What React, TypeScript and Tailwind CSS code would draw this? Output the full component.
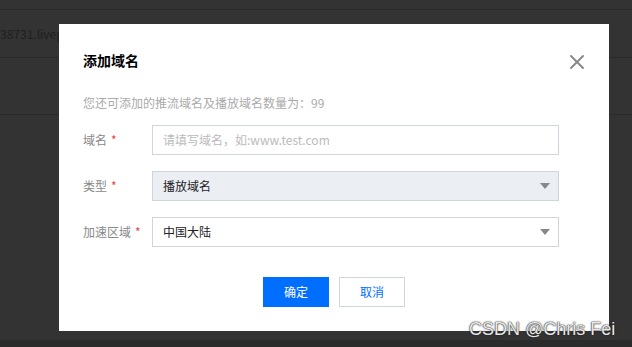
import { X } from "lucide-react";

const font = { fontFamily: '"Noto Sans CJK SC", "Noto Sans", sans-serif' };

const Caret = () => (
  <svg width="10" height="6" viewBox="0 0 10 6" className="text-[#888]">
    <path d="M0 0 H10 L5 6 Z" fill="currentColor" />
  </svg>
);

const Label = ({ text }: { text: string }) => (
  <div className="w-[69px] shrink-0 text-[12px] text-[#888]">
    {text}
    <span className="ml-1 text-[#e54545]">*</span>
  </div>
);

export default function App() {
  return (
    <div
      className="relative w-[632px] h-[347px] overflow-hidden bg-[#333333]"
      style={font}
    >
      {/* page behind the mask */}
      <div className="h-[10px] border-b border-[#2a2a2a]" />
      <div className="h-[48px] border-b border-[#2a2a2a] flex items-center">
        <span className="text-[12px] text-[#1f1f1f]">38731.livepush.myqcloud.com</span>
      </div>
      <div className="h-[57px] border-b border-[#2a2a2a]" />
      <div className="h-[225px]" />
      <div className="h-[7px] bg-[#2b2b2b]" />

      {/* dialog */}
      <div className="absolute left-[59px] top-[24px] w-[550px] h-[307px] bg-white">
        <div className="mt-[24px] h-[24px] flex items-center justify-between pl-[24px] pr-[20px]">
          <h2 className="text-[14px] leading-[20px] font-bold text-black">添加域名</h2>
          <X className="size-[24px] text-[#888] mt-[4px]" strokeWidth={1.9} />
        </div>
        <p className="pl-[24px] mt-[23px] text-[12px] leading-[16px] text-[#aaa]">
          您还可添加的推流域名及播放域名数量为：99
        </p>
        <div className="pl-[24px] pr-[50px] mt-[14px] flex flex-col gap-[16px]">
          <div className="flex items-center">
            <Label text="域名" />
            <div className="flex-1 h-[30px] border border-[#d1d5dd] flex items-center px-[10px] text-[12px] text-[#bbb]">
              请填写域名，如:www.test.com
            </div>
          </div>
          <div className="flex items-center">
            <Label text="类型" />
            <div className="flex-1 h-[30px] border border-[#cfd5de] bg-[#ebeef3] flex items-center justify-between pl-[10px] pr-[8px] text-[12px] text-[#222]">
              播放域名
              <Caret />
            </div>
          </div>
          <div className="flex items-center">
            <Label text="加速区域" />
            <div className="flex-1 h-[30px] border border-[#cfd5de] bg-white flex items-center justify-between pl-[10px] pr-[8px] text-[12px] text-[#222]">
              中国大陆
              <Caret />
            </div>
          </div>
        </div>
        <div className="mt-[30px] flex justify-center gap-[10px]">
          <button className="w-[66px] h-[30px] bg-[#006eff] text-white text-[12px]">
            确定
          </button>
          <button className="w-[66px] h-[30px] border border-[#cfd5de] bg-white text-[#006eff] text-[12px]">
            取消
          </button>
        </div>
      </div>

      {/* watermark */}
      <div
        className="absolute left-[469px] top-[320px] text-[18px] leading-none text-[#e8e8e8] [text-shadow:0_0_2px_#222,0_0_1px_#222]"
        style={{ fontFamily: '"Liberation Sans", sans-serif' }}
      >
        CSDN @Chris Fei
      </div>
    </div>
  );
}
